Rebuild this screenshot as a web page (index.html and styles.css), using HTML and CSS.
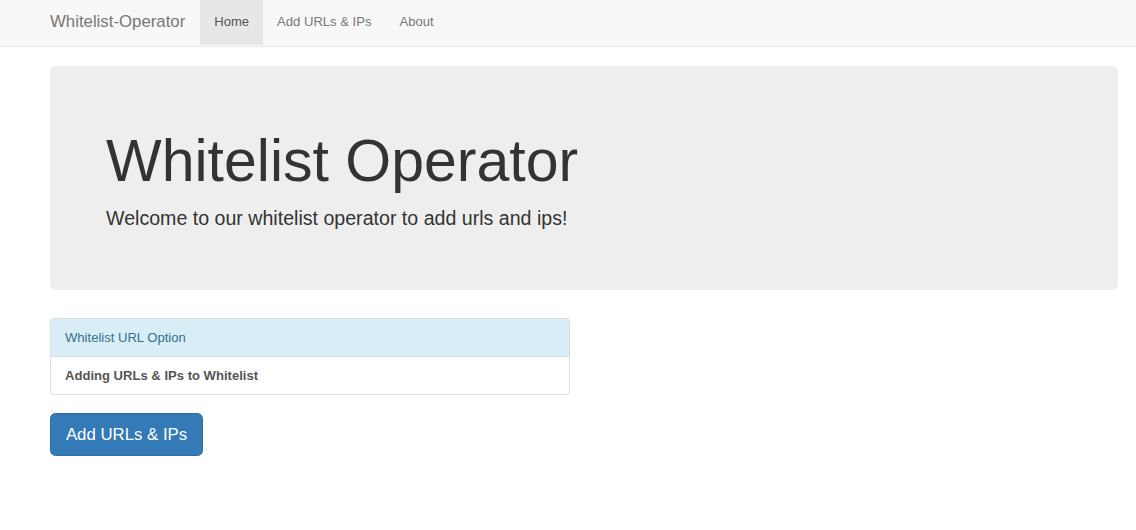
FILE: index.html
```html
<!DOCTYPE html>
<html lang="en">
<head>
<meta charset="utf-8">
<title>Whitelist-Operator</title>
<link rel="stylesheet" href="styles.css">
</head>
<body>
<nav class="navbar">
  <div class="nav-inner">
    <a class="brand" href="#">Whitelist-Operator</a>
    <ul class="nav-links">
      <li><a class="active" href="#">Home</a></li>
      <li><a href="#">Add URLs &amp; IPs</a></li>
      <li><a href="#">About</a></li>
    </ul>
  </div>
</nav>
<main class="page">
  <section class="jumbotron">
    <h1>Whitelist Operator</h1>
    <p>Welcome to our whitelist operator to add urls and ips!</p>
  </section>
  <div class="list-group">
    <div class="list-item info">Whitelist URL Option</div>
    <div class="list-item strong">Adding URLs &amp; IPs to Whitelist</div>
  </div>
  <a class="btn" href="#">Add URLs &amp; IPs</a>
</main>
</body>
</html>
```

FILE: styles.css
```css
* { box-sizing: border-box; }
html, body { margin: 0; padding: 0; }
body {
  font-family: "Liberation Sans", Arial, Helvetica, sans-serif;
  font-size: 13.07px;
  line-height: 1.42857;
  color: #333;
  background: #fff;
}
a { text-decoration: none; }

.navbar {
  height: 47px;
  background: #f8f8f8;
  border-bottom: 1px solid #e7e7e7;
  margin-bottom: 19px;
}
.nav-inner {
  display: flex;
  height: 46px;
  padding-left: 36px;
}
.brand {
  display: block;
  padding: 0 15px 0 14px;
  font-size: 16.8px;
  line-height: 43px;
  color: #777;
}
.nav-links {
  display: flex;
  list-style: none;
  margin: 0;
  padding: 0;
}
.nav-links a {
  display: block;
  padding: 0 14px;
  line-height: 43px;
  height: 45px;
  color: #777;
}
.nav-links a.active {
  background: #e7e7e7;
  color: #555;
}

.page {
  padding: 0 18px 0 50px;
}
.jumbotron {
  background: #eee;
  border-radius: 5.6px;
  padding: 44.8px 56px;
  margin-bottom: 28px;
}
.jumbotron h1 {
  margin: 18.7px 0 9.3px;
  font-size: 59px;
  font-weight: 500;
  line-height: 1.1;
  color: #333;
}
.jumbotron p {
  margin: 0 0 14px;
  font-size: 19.6px;
  line-height: 28px;
  font-weight: 200;
}

.list-group {
  width: 520px;
  margin-bottom: 18px;
}
.list-item {
  padding: 9.5px 14px;
  line-height: 18px;
  border: 1px solid #ddd;
  margin-bottom: -1px;
  background: #fff;
  color: #555;
}
.list-item:first-child {
  border-radius: 3.7px 3.7px 0 0;
}
.list-item:last-child {
  margin-bottom: 0;
  border-radius: 0 0 3.7px 3.7px;
}
.list-item.info {
  background: #d9edf7;
  color: #31708f;
}
.list-item.strong {
  font-weight: bold;
}

.btn {
  display: inline-block;
  padding: 9.3px 14.9px;
  font-size: 16.8px;
  line-height: 22.4px;
  color: #fff;
  background: #337ab7;
  border: 1px solid #2e6da4;
  border-radius: 5.6px;
}
```
